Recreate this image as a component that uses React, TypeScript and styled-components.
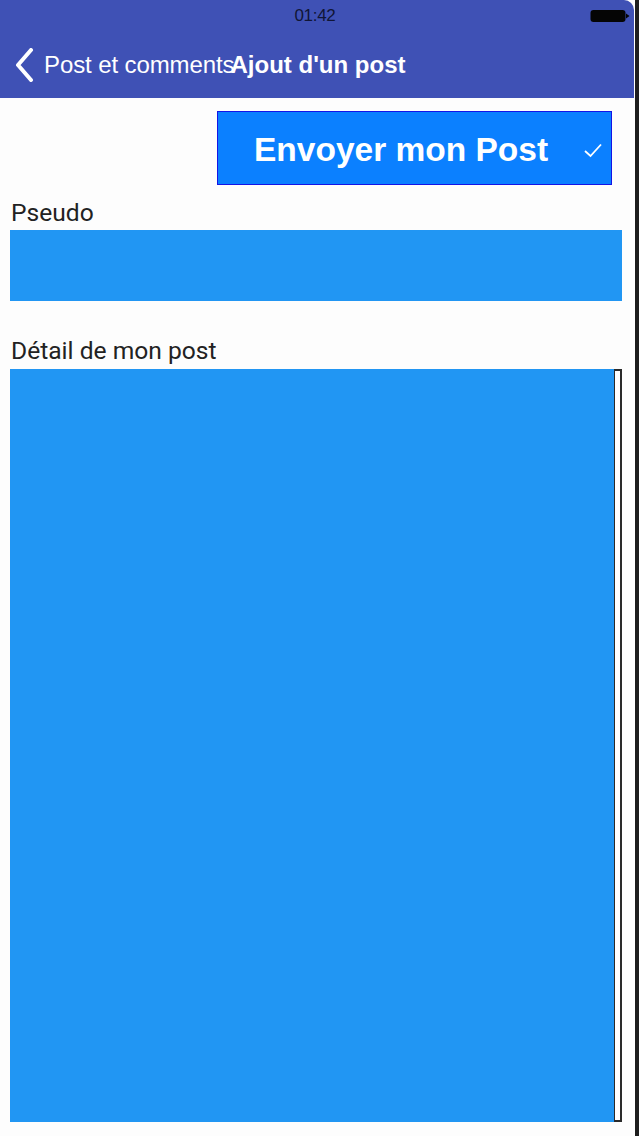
import * as React from "react";
import styled, { createGlobalStyle } from "styled-components";

const GlobalStyle = createGlobalStyle`
  html, body {
    margin: 0;
    padding: 0;
    background: #ffffff;
  }
`;

const Frame = styled.div`
  display: flex;
  width: 639px;
  height: 1136px;
  overflow: hidden;
  background: #ffffff;
`;

const Screen = styled.div`
  display: flex;
  flex-direction: column;
  width: 634px;
  background: #fdfdfd;
`;

const Edge = styled.div`
  width: 4px;
  margin-left: 1px;
  background: #1e1e1e;
`;

const Header = styled.header`
  height: 98px;
  background: #3f51b5;
  border-top-right-radius: 10px;
  display: flex;
  flex-direction: column;
`;

const StatusBar = styled.div`
  height: 30px;
  display: grid;
  grid-template-columns: 1fr auto 1fr;
  align-items: center;
  padding: 1px 4px 0 0;
`;

const Clock = styled.span`
  grid-column: 2;
  font-family: "Liberation Sans", Arial, sans-serif;
  font-size: 17px;
  color: #101535;
  letter-spacing: -0.3px;
`;

const Battery = styled.svg`
  grid-column: 3;
  justify-self: end;
`;

const NavBar = styled.div`
  flex: 1;
  display: flex;
  align-items: center;
  padding: 1px 0 0 14px;
  font-family: "Liberation Sans", Arial, sans-serif;
  font-size: 24px;
  color: #ffffff;
  white-space: nowrap;
`;

const BackLabel = styled.span`
  margin-left: 10px;
  letter-spacing: -0.1px;
`;

const Title = styled.span`
  font-weight: 700;
  margin-left: -4px;
`;

const Body = styled.main`
  flex: 1;
  display: flex;
  flex-direction: column;
  padding: 13px 12px 14px 10px;
`;

const ButtonRow = styled.div`
  display: flex;
  justify-content: flex-end;
  padding-right: 10px;
`;

const SendButton = styled.button`
  width: 395px;
  height: 74px;
  box-sizing: border-box;
  display: flex;
  align-items: center;
  justify-content: space-between;
  padding: 3px 8px 0 36px;
  background: #0b80ff;
  border: 1px solid #1414e6;
  color: #ffffff;
  font-family: "Liberation Sans", Arial, sans-serif;
  font-weight: 700;
  font-size: 33.5px;
  cursor: pointer;
`;

const Label = styled.label<{ $gap: number }>`
  display: block;
  margin-top: ${(p) => p.$gap}px;
  padding-left: 1px;
  font-family: Roboto, "Noto Sans", sans-serif;
  font-size: 24.6px;
  line-height: 28px;
  color: #222222;
`;

const Field = styled.div<{ $height?: number }>`
  margin-top: 3px;
  height: ${(p) => (p.$height ? `${p.$height}px` : "auto")};
  background: #2196f3;
`;

const AreaRow = styled.div`
  flex: 1;
  margin-top: 4px;
  display: flex;
`;

const AreaFill = styled.div`
  flex: 1;
  background: #2196f3;
`;

const ScrollTrack = styled.div`
  width: 8px;
  box-sizing: border-box;
  border: 2px solid #2a2a2a;
  border-left-width: 1.5px;
  background: #ffffff;
`;

const App = () => {
  return (
    <Frame>
      <GlobalStyle />
      <Screen>
        <Header>
          <StatusBar>
            <Clock>01:42</Clock>
            <Battery width="40" height="14" viewBox="0 0 40 14">
              <rect x="0.5" y="1" width="35" height="12" rx="3" fill="#050505" />
              <path d="M36 4.5 L39.5 7 L36 9.5 Z" fill="#050505" />
            </Battery>
          </StatusBar>
          <NavBar>
            <svg width="20" height="34" viewBox="0 0 20 34">
              <path
                d="M17 2 L4 17 L17 32"
                fill="none"
                stroke="#ffffff"
                strokeWidth="4"
                strokeLinecap="round"
                strokeLinejoin="round"
              />
            </svg>
            <BackLabel>Post et comments</BackLabel>
            <Title>Ajout d'un post</Title>
          </NavBar>
        </Header>
        <Body>
          <ButtonRow>
            <SendButton>
              <span>Envoyer mon Post</span>
              <svg width="20" height="16" viewBox="0 0 20 16">
                <path
                  d="M2 9 L7.5 14 L18 2.5"
                  fill="none"
                  stroke="#ffffff"
                  strokeWidth="1.8"
                />
              </svg>
            </SendButton>
          </ButtonRow>
          <Label $gap={14}>Pseudo</Label>
          <Field $height={71} />
          <Label $gap={36}>Détail de mon post</Label>
          <AreaRow>
            <AreaFill />
            <ScrollTrack />
          </AreaRow>
        </Body>
      </Screen>
      <Edge />
    </Frame>
  );
};

export default App;
